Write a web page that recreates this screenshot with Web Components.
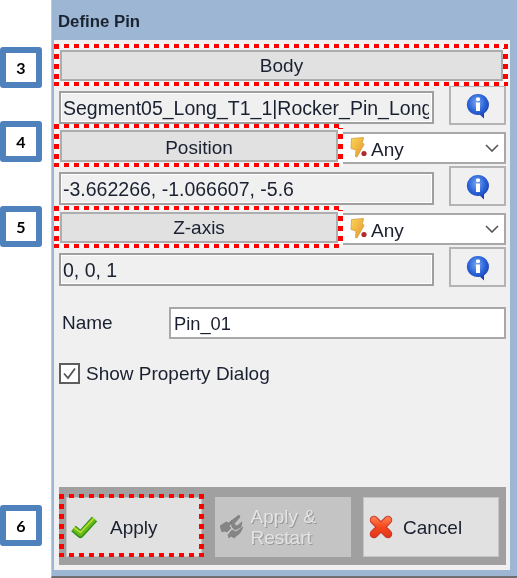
<!DOCTYPE html>
<html>
<head>
<meta charset="utf-8">
<title>Define Pin</title>
<style>
  html, body { margin: 0; background: #fff; }
  body { font-family: "Liberation Sans", Arial, sans-serif; color: #1a1a1a; }
</style>
</head>
<body>
<pin-page>
  <pin-callout slot="gutter" style="margin-top:47px">3</pin-callout>
  <pin-callout slot="gutter" style="margin-top:33px">4</pin-callout>
  <pin-callout slot="gutter" style="margin-top:44px">5</pin-callout>
  <pin-callout slot="gutter" style="margin-top:258px">6</pin-callout>

  <pin-button marked style="height:31px;margin:10px 3px 0 1px">Body</pin-button>
  <pin-row style="margin-top:4px">
    <pin-field>Segment05_Long_T1_1|Rocker_Pin_Long</pin-field>
    <pin-info></pin-info>
  </pin-row>
  <pin-row top style="margin-top:5px">
    <pin-button marked style="width:278px;height:32px;margin-left:1px;padding-top:3px">Position</pin-button>
    <pin-select style="margin-top:2px">Any</pin-select>
  </pin-row>
  <pin-row style="margin-top:2px">
    <pin-field>-3.662266, -1.066607, -5.6</pin-field>
    <pin-info></pin-info>
  </pin-row>
  <pin-row top style="margin-top:6px">
    <pin-button marked style="width:278px;height:31px;margin-left:1px;padding-top:1px">Z-axis</pin-button>
    <pin-select style="margin-top:1px">Any</pin-select>
  </pin-row>
  <pin-row style="margin-top:2px">
    <pin-field>0, 0, 1</pin-field>
    <pin-info></pin-info>
  </pin-row>
  <pin-name style="margin-top:20px">Pin_01</pin-name>
  <pin-check style="margin-top:24px">Show Property Dialog</pin-check>
  <pin-actions style="margin-top:103px">
    <pin-action marked icon="check" style="--pad:3px;--gap:13px">Apply</pin-action>
    <pin-action disabled icon="gears" style="--pad:4px;--gap:7px">Apply &amp;<br>Restart</pin-action>
    <pin-action icon="cross" style="--pad:5px;--gap:10px">Cancel</pin-action>
  </pin-actions>
</pin-page>

<script>
const FONT = `"Liberation Sans", Arial, sans-serif`;

// square red dashes drawn around a marked control
const DASHES = `
  background:
    repeating-linear-gradient(90deg, #f00 0 5px, var(--dash-gap, #fafafa) 5px 10px) top / 100% 4px no-repeat,
    repeating-linear-gradient(90deg, #f00 0 5px, var(--dash-gap, #fafafa) 5px 10px) bottom / 100% 4px no-repeat,
    repeating-linear-gradient(180deg, #f00 0 5px, var(--dash-gap, #fafafa) 5px 10px) left / 5px 100% no-repeat,
    repeating-linear-gradient(180deg, #f00 0 5px, var(--dash-gap, #fafafa) 5px 10px) right / 5px 100% no-repeat;
`;

const ICONS = {
  check: `<svg width="27" height="25" viewBox="0 0 27 25">
    <g fill="none" stroke-linejoin="round">
      <path d="M3.5 13.5 10.5 19.5 24.5 4" stroke="#2a8a12" stroke-width="7"/>
      <path d="M3.5 13.5 10.5 19 24.5 4" stroke="#63b81c" stroke-width="4.8"/>
      <path d="M4 12.5 10.5 17.5 24 3.2" stroke="#b4dc2e" stroke-width="1.8"/>
    </g>
  </svg>`,
  cross: `<svg width="24" height="24" viewBox="0 0 24 24">
    <defs><linearGradient id="r" gradientUnits="userSpaceOnUse" x1="0" y1="2" x2="0" y2="22"><stop offset="0" stop-color="#ff8152"/><stop offset=".5" stop-color="#f5481c"/><stop offset="1" stop-color="#e2361a"/></linearGradient></defs>
    <g fill="none" stroke-linecap="round">
      <path d="M5 5 19 19M19 5 5 19" stroke="#c6362a" stroke-width="8.5"/>
      <path d="M5 5 19 19M19 5 5 19" stroke="url(#r)" stroke-width="6.5"/>
    </g>
  </svg>`,
  gears: `<svg width="24" height="24" viewBox="0 0 24 24">
    <g fill="#858585" stroke="#757575" stroke-width=".6">
      <path d="M0 11 6 7 9 8 12 5 13 7 9 11 11 13 7 17 4 16 2 17Z"/>
      <path d="M11 6 19 0 20 2 14 9 17 11 22 7 21 12 15 15 12 12Z"/>
      <path d="M8 20 12 15 16 17 23 12 20 18 14 23 11 21 9 23Z"/>
    </g>
  </svg>`,
};

class PinPage extends HTMLElement {
  constructor() {
    super();
    this.attachShadow({ mode: "open" }).innerHTML = `
      <style>
        :host { display: flex; width: 517px; height: 578px; overflow: hidden; background: #fff; font: 19px ${FONT}; filter: blur(.35px); }
        #gutter { display: flex; flex-direction: column; width: 51px; flex: none; }
        #window { flex: 1; display: flex; flex-direction: column; background: #9db6d3; border-left: 1px solid #b9cce0; border-bottom: 2px solid #6e6e6e; min-width: 0; }
        h1 { margin: 0; height: 40px; box-sizing: border-box; padding: 13px 0 0 6px; font: bold 16.8px/18px ${FONT}; color: #1a2430; }
        #panel { flex: 1; margin: 0 7px 6px 2px; background: #f0f0f0; padding: 0 4px 0 5px; display: flex; flex-direction: column; }
      </style>
      <div id="gutter"><slot name="gutter"></slot></div>
      <div id="window">
        <h1>Define Pin</h1>
        <div id="panel"><slot></slot></div>
      </div>`;
  }
}

class PinCallout extends HTMLElement {
  constructor() {
    super();
    this.attachShadow({ mode: "open" }).innerHTML = `
      <style>
        :host { display: flex; align-items: center; justify-content: center; box-sizing: border-box; width: 42px; height: 41px; flex: none; background: #fff; border: 6px solid #4f81bd; border-radius: 3px; font: bold 16px Lato, ${FONT}; color: #000; }
      </style><slot></slot>`;
  }
}

class PinRow extends HTMLElement {
  constructor() {
    super();
    this.attachShadow({ mode: "open" }).innerHTML = `
      <style>
        :host { display: flex; align-items: flex-end; justify-content: space-between; }
        :host([top]) { align-items: flex-start; }
      </style><slot></slot>`;
  }
}

class PinButton extends HTMLElement {
  constructor() {
    super();
    this.attachShadow({ mode: "open" }).innerHTML = `
      <style>
        :host { display: flex; position: relative; align-items: center; justify-content: center; box-sizing: border-box; flex: none; background: #e1e1e1; border: 2px solid #adadad; font-size: 19px; color: #1a2030; }
        :host([marked])::after { content: ""; position: absolute; inset: -8px -7px -7px -8px; ${DASHES} }
      </style><slot></slot>`;
  }
}

class PinField extends HTMLElement {
  constructor() {
    super();
    this.attachShadow({ mode: "open" }).innerHTML = `
      <style>
        :host { display: block; box-sizing: border-box; width: 375px; height: 33px; flex: none; margin-bottom: 1px; background: #f0f0f0; border: 2px solid #a0a0a0; box-shadow: inset 0 0 0 1px #fff; padding: 0 3px 0 2px; font-size: 19.5px; color: #1a2030; }
        div { line-height: 30px; white-space: nowrap; overflow: hidden; }
      </style><div><slot></slot></div>`;
  }
}

class PinInfo extends HTMLElement {
  constructor() {
    super();
    this.attachShadow({ mode: "open" }).innerHTML = `
      <style>
        :host { display: flex; align-items: center; justify-content: center; box-sizing: border-box; width: 57px; height: 40px; flex: none; background: #f0f0f0; border: 2px solid #b4b4b4; }
        svg { margin-top: 1px; }
      </style>
      <svg width="24" height="26" viewBox="0 0 24 26">
        <defs><radialGradient id="b" cx=".45" cy=".35" r=".7"><stop offset="0" stop-color="#7aa9f0"/><stop offset=".55" stop-color="#2a62d8"/><stop offset="1" stop-color="#14349c"/></radialGradient></defs>
        <path d="M12 1a11 10.5 0 1 0 2 20.8L18 25.5 18 20.4A10.5 10.5 0 0 0 12 1Z" fill="url(#b)"/>
        <rect x="10" y="9.5" width="4" height="8.5" fill="#fff"/>
        <rect x="10" y="4.5" width="4" height="3.5" rx="1.2" fill="#fff"/>
      </svg>`;
  }
}

class PinSelect extends HTMLElement {
  constructor() {
    super();
    this.attachShadow({ mode: "open" }).innerHTML = `
      <style>
        :host { display: flex; align-items: center; box-sizing: border-box; width: 165px; height: 32px; flex: none; background: #fff; border: 2px solid #a8a8a8; padding: 0 5px 0 6px; font-size: 19px; color: #1a2030; }
        span { flex: 1; margin-left: 3px; padding-top: 3px; }
      </style>
      <svg width="19" height="22" viewBox="0 0 19 22">
        <defs><linearGradient id="y" x1="0" y1="0" x2="1" y2="1"><stop offset="0" stop-color="#f9d65a"/><stop offset="1" stop-color="#e8942a"/></linearGradient></defs>
        <path d="M2.5 1.5 14.5.5 13.5 5.5 15 7.5 8 20 6.5 19.5 7 13 2 11.5Z" fill="url(#y)" stroke="#d2a040" stroke-width=".8" stroke-linejoin="round"/>
        <circle cx="15" cy="16.5" r="2.6" fill="#b02a30"/>
      </svg>
      <span><slot></slot></span>
      <svg width="14" height="8" viewBox="0 0 14 8"><path d="M1 1 7 7 13 1" fill="none" stroke="#555" stroke-width="1.6"/></svg>`;
  }
}

class PinName extends HTMLElement {
  constructor() {
    super();
    this.attachShadow({ mode: "open" }).innerHTML = `
      <style>
        :host { display: flex; align-items: center; font-size: 19px; color: #1a2030; }
        label { width: 110px; flex: none; padding-left: 3px; box-sizing: border-box; }
        div { box-sizing: border-box; width: 337px; height: 32px; background: #fff; border: 2px solid #a8a8a8; padding: 0 3px; line-height: 29px; font-size: 18.3px; }
      </style>
      <label>Name</label><div><slot></slot></div>`;
  }
}

class PinCheck extends HTMLElement {
  constructor() {
    super();
    this.attachShadow({ mode: "open" }).innerHTML = `
      <style>
        :host { display: flex; align-items: center; gap: 6px; height: 21px; font-size: 19px; color: #1a2030; }
        i { box-sizing: border-box; display: block; width: 21px; height: 21px; background: #fff; border: 2px solid #5e5e5e; }
        svg { display: block; }
      </style>
      <i><svg width="17" height="17" viewBox="0 0 17 17"><path d="M3 8.5 7 13 14 3.5" fill="none" stroke="#555" stroke-width="1.8"/></svg></i>
      <span><slot></slot></span>`;
  }
}

class PinActions extends HTMLElement {
  constructor() {
    super();
    this.attachShadow({ mode: "open" }).innerHTML = `
      <style>
        :host { display: flex; justify-content: space-between; box-sizing: border-box; width: 447px; height: 78px; padding: 10px 7px 8px 7px; background: #a0a0a0; }
      </style><slot></slot>`;
  }
}

class PinAction extends HTMLElement {
  constructor() {
    super();
    const icon = ICONS[this.getAttribute("icon")] || "";
    this.attachShadow({ mode: "open" }).innerHTML = `
      <style>
        :host { display: flex; position: relative; align-items: center; box-sizing: border-box; width: 136px; height: 60px; flex: none; background: #e1e1e1; border: 1px solid #c4c4c4; padding-left: var(--pad, 3px); font-size: 19px; color: #1a2030; }
        :host([marked])::after { content: ""; position: absolute; inset: -4px -3px -1px -8px; --dash-gap: transparent; ${DASHES} }
        :host([disabled]) { background: #c4c4c4; border-color: #c4c4c4; color: #e4e4e4; text-shadow: 1px 1px 0 #969696; }
        svg { display: block; flex: none; }
        span { margin-left: var(--gap, 10px); line-height: 21px; }
      </style>
      ${icon}<span><slot></slot></span>`;
  }
}

customElements.define("pin-page", PinPage);
customElements.define("pin-callout", PinCallout);
customElements.define("pin-row", PinRow);
customElements.define("pin-button", PinButton);
customElements.define("pin-field", PinField);
customElements.define("pin-info", PinInfo);
customElements.define("pin-select", PinSelect);
customElements.define("pin-name", PinName);
customElements.define("pin-check", PinCheck);
customElements.define("pin-actions", PinActions);
customElements.define("pin-action", PinAction);
</script>
</body>
</html>
